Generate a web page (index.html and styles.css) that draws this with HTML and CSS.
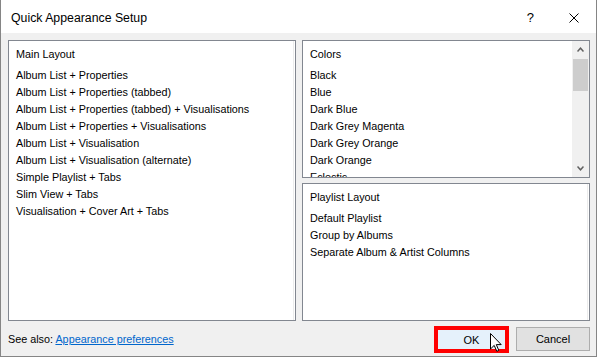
FILE: index.html
```html
<!DOCTYPE html>
<html lang="en">
<head>
  <meta charset="UTF-8" />
  <title>Quick Appearance Setup</title>
  <link rel="stylesheet" href="styles.css">
</head>
<body>

  <div class="window">

    <!-- Title bar -->
    <div class="titlebar">
      <span class="title">Quick Appearance Setup</span>
      <div class="title-buttons">
        <span class="help">?</span>
        <svg class="close" width="10" height="10" viewBox="0 0 10 10">
          <path d="M0.5 0.5 L9.5 9.5 M9.5 0.5 L0.5 9.5" stroke="#000" stroke-width="1" fill="none"/>
        </svg>
      </div>
    </div>

    <div class="content">
      <div class="panes">

        <!-- Main layout list -->
        <div class="list">
          <div class="list-body">
            <div class="list-head">Main Layout</div>
            <ul class="items">
              <li>Album List + Properties</li>
              <li>Album List + Properties (tabbed)</li>
              <li>Album List + Properties (tabbed) + Visualisations</li>
              <li>Album List + Properties + Visualisations</li>
              <li>Album List + Visualisation</li>
              <li>Album List + Visualisation (alternate)</li>
              <li>Simple Playlist + Tabs</li>
              <li>Slim View + Tabs</li>
              <li>Visualisation + Cover Art + Tabs</li>
            </ul>
          </div>
        </div>

        <div class="side">
          <!-- Colors list -->
          <div class="list">
            <div class="list-body no-line">
              <div class="list-head">Colors</div>
              <ul class="items">
                <li>Black</li>
                <li>Blue</li>
                <li>Dark Blue</li>
                <li>Dark Grey Magenta</li>
                <li>Dark Grey Orange</li>
                <li>Dark Orange</li>
                <li>Eclectic</li>
              </ul>
            </div>
            <div class="scrollbar">
              <div class="sb-btn">
                <svg width="7" height="5" viewBox="0 0 7 5"><polyline points="0.5,4.5 3.5,1.2 6.5,4.5" fill="none" stroke="#606060" stroke-width="1.5"/></svg>
              </div>
              <div class="sb-track">
                <div class="sb-thumb"></div>
              </div>
              <div class="sb-btn">
                <svg width="7" height="5" viewBox="0 0 7 5"><polyline points="0.5,0.5 3.5,3.8 6.5,0.5" fill="none" stroke="#606060" stroke-width="1.5"/></svg>
              </div>
            </div>
          </div>

          <!-- Playlist layout list -->
          <div class="list">
            <div class="list-body">
              <div class="list-head">Playlist Layout</div>
              <ul class="items">
                <li>Default Playlist</li>
                <li>Group by Albums</li>
                <li>Separate Album &amp; Artist Columns</li>
              </ul>
            </div>
          </div>
        </div>

      </div>

      <!-- Footer -->
      <div class="footer">
        <span class="see-also">See also: <a href="#">Appearance preferences</a></span>
        <button class="btn btn-ok">OK
          <svg class="pointer" width="12" height="19" viewBox="0 0 12 19">
            <path d="M0.5 0.5 L0.5 16 L4.2 12.4 L6.8 18.3 L8.8 17.4 L6.3 11.6 L11.2 11.6 Z" fill="#fff" stroke="#000" stroke-width="1" stroke-linejoin="miter"/>
          </svg>
        </button>
        <button class="btn btn-cancel">Cancel</button>
      </div>
    </div>

  </div>

</body>
</html>
```

FILE: styles.css
```css
* {
  box-sizing: border-box;
  margin: 0;
  padding: 0;
}

body {
  font-family: 'Liberation Sans', Arial, sans-serif;
  font-size: 10.8px;
  color: #000;
  background: #fff;
}

.window {
  width: 597px;
  height: 357px;
  border: 1px solid #858585;
  border-top: none;
  background: #f0f0f0;
  display: flex;
  flex-direction: column;
}

.titlebar {
  height: 33px;
  flex-shrink: 0;
  background: #fff;
  display: flex;
  align-items: center;
  justify-content: space-between;
  padding: 2px 17px 0 10px;
}

.title {
  font-size: 12.3px;
}

.title-buttons {
  display: flex;
  align-items: center;
}

.help {
  font-size: 13px;
  margin-right: 35px;
}

.close {
  display: block;
}

.content {
  flex: 1;
  padding: 7px 6px 0 7px;
  display: flex;
  flex-direction: column;
}

.panes {
  height: 281px;
  display: grid;
  grid-template-columns: 288px 288px;
  gap: 6px;
}

.side {
  display: flex;
  flex-direction: column;
  gap: 5px;
}

.list {
  flex: 1;
  min-height: 0;
  background: #fff;
  border: 1px solid #828790;
  display: flex;
  overflow: hidden;
}

.list-body {
  flex: 1;
  padding: 5px 0 0 7px;
  margin-right: 1px;
  border-right: 1px solid #ececec;
  overflow: hidden;
}

.list-body.no-line {
  border-right: none;
  margin-right: 0;
}

.list-head {
  line-height: 17px;
  margin-bottom: 4px;
  white-space: nowrap;
}

.items {
  list-style: none;
}

.items li {
  line-height: 17px;
  white-space: nowrap;
}

.scrollbar {
  width: 17px;
  background: #f0f0f0;
  display: flex;
  flex-direction: column;
}

.sb-btn {
  height: 17px;
  display: flex;
  align-items: center;
  justify-content: center;
}

.sb-btn svg {
  display: block;
}

.sb-track {
  flex: 1;
  padding: 1px 1px 0 1px;
}

.sb-thumb {
  height: 32px;
  background: #cdcdcd;
}

.footer {
  height: 35px;
  display: flex;
  align-items: flex-start;
  padding-top: 6px;
}

.see-also {
  line-height: 24px;
  white-space: nowrap;
}

.see-also a {
  color: #0066cc;
  text-decoration: underline;
}

.btn {
  font-family: inherit;
  font-size: 11px;
  color: #000;
  height: 24px;
}

.btn-ok {
  position: relative;
  margin-left: auto;
  margin-top: -1px;
  width: 75px;
  height: 27px;
  border: 4px solid #ff0000;
  background: #e5f1fb;
}

.btn-cancel {
  margin-left: 7px;
  width: 74px;
  border: 1px solid #adadad;
  background: #e1e1e1;
}

.pointer {
  position: absolute;
  left: 52px;
  top: 3px;
}
```
